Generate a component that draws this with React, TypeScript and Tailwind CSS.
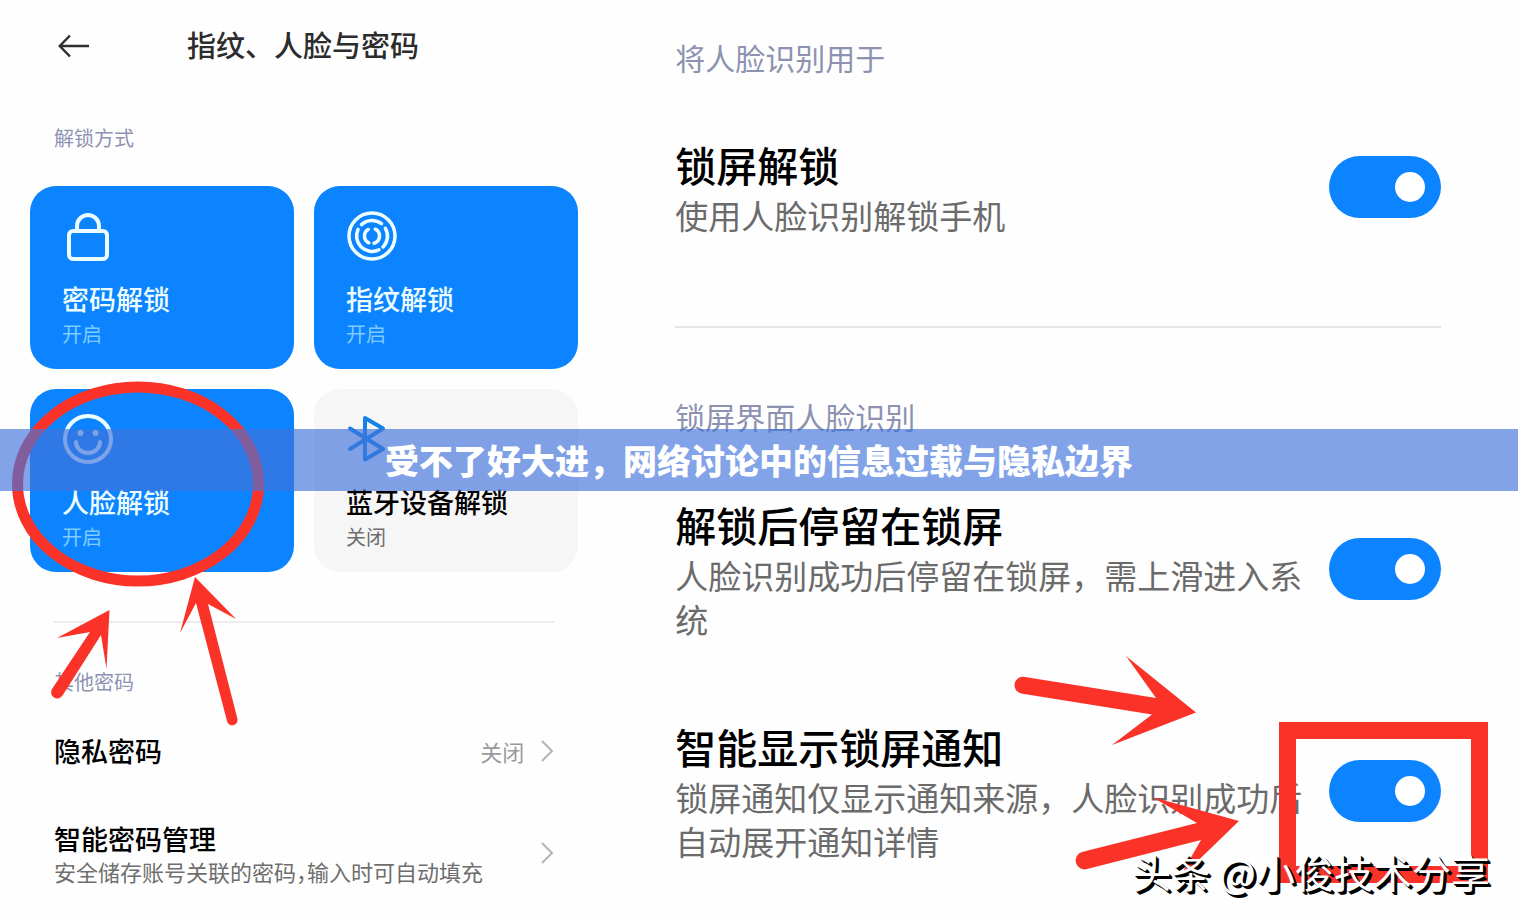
import { useState } from "react";
import type { ReactNode } from "react";

const sectionSmall = "text-[20px] leading-[24px] text-[#8e93b3]";
const sectionLarge = "text-[30px] leading-[40px] text-[#8c92b0]";
const rowTitle = "text-[27px] leading-[36px] font-medium text-black";
const icon = "h-[50px] w-[52px] fill-none";

function LockIcon() {
  return (
    <svg viewBox="0 0 52 50" className={icon} stroke="currentColor" strokeWidth="4">
      <rect x="7" y="20" width="38" height="28" rx="4" />
      <path d="M15 20V15a11 11 0 0 1 22 0V20" />
    </svg>
  );
}

function FingerprintIcon() {
  return (
    <svg viewBox="0 0 52 50" className={icon} stroke="currentColor" strokeWidth="3.5" strokeLinecap="round">
      <circle cx="26" cy="25" r="23" />
      <path d="M15.5 13.6A15.5 15.5 0 0 1 35.5 12.7" />
      <path d="M39.4 17.3A15.5 15.5 0 0 1 37 36" />
      <path d="M33 38.8A15.5 15.5 0 0 1 12 18.4" />
      <path d="M22.2 18.5A7.5 7.5 0 0 0 22.8 31.8" />
      <path d="M29.2 18.2A7.5 7.5 0 0 1 28 32.2" />
    </svg>
  );
}

function SmileIcon() {
  return (
    <svg viewBox="0 0 52 50" className={icon} stroke="currentColor" strokeWidth="4" strokeLinecap="round">
      <circle cx="26" cy="25" r="23" />
      <path d="M14 28a12 11 0 0 0 24 0" />
      <circle cx="18.5" cy="19" r="3" fill="currentColor" stroke="none" />
      <circle cx="33.5" cy="19" r="3" fill="currentColor" stroke="none" />
    </svg>
  );
}

function BluetoothIcon() {
  return (
    <svg
      viewBox="0 0 52 50"
      className={icon}
      stroke="#1583e4"
      strokeWidth="4"
      strokeLinecap="round"
      strokeLinejoin="round"
    >
      <path d="M4 14.5L37 35L19 45.5V4L37 14.5L4 35" />
    </svg>
  );
}

function MethodCard({ icon, title, on }: { icon: ReactNode; title: string; on: boolean }) {
  return (
    <button
      className={`flex flex-col items-start rounded-[26px] pt-[25px] pr-4 pb-[23px] pl-8 text-left ${
        on ? "bg-[#0c84ff] text-[#ecfdff]" : "bg-[#f6f6f6] text-black"
      }`}
    >
      {icon}
      <span className="mt-5 text-[27px] leading-[36px] font-medium">{title}</span>
      <span className={`mt-[5px] text-[20px] leading-[24px] ${on ? "text-[#7fcbff]" : "text-[#6e6e6e]"}`}>
        {on ? "开启" : "关闭"}
      </span>
    </button>
  );
}

function Chevron() {
  return (
    <svg viewBox="0 0 14 24" className="h-6 w-[14px] shrink-0 fill-none" stroke="#b4b4b4" strokeWidth="2">
      <path d="M2 2L12 12L2 22" />
    </svg>
  );
}

function ToggleRow({ id, title, desc, className }: { id: string; title: string; desc: string; className: string }) {
  const [on, setOn] = useState(true);

  return (
    <div className={`flex items-center justify-between gap-4 ${className}`}>
      <label htmlFor={id} className="block">
        <span className="block text-[41px] leading-[50px] font-medium text-black">{title}</span>
        <span className="mt-1 block text-[33px] leading-[44px] text-[#6b6b6b]">{desc}</span>
      </label>
      <div className="shrink-0 pb-0.5">
        <input
          id={id}
          type="checkbox"
          role="switch"
          checked={on}
          onChange={(e) => setOn(e.target.checked)}
          className="flex h-[62px] w-[112px] appearance-none items-center rounded-full bg-[#d9d9d9] px-4 before:size-[30px] before:rounded-full before:bg-white checked:justify-end checked:bg-[#0c84ff]"
        />
      </div>
    </div>
  );
}

// Red hand-drawn marks that lie over both screens
function Marks() {
  return (
    <svg viewBox="0 0 1518 920" className="pointer-events-none absolute top-0 left-0 w-full" fill="#fa3228">
      <ellipse cx="138" cy="484" rx="120.5" ry="97" fill="none" stroke="#fa3228" strokeWidth="11" />
      <path d="M109.5 610L57 638L90 632L52 689A5.500 5.500 0 0 0 62.5 695.500L101 635L106.500 669Z" />
      <path d="M195 577L180 633L196 603L227 721A5.200 5.200 0 0 0 237.500 719L208 604L236 619Z" />
      <path d="M1196 712.5L1126 656L1156 698L1025 677A8.400 8.400 0 0 0 1021 693.500L1152 714.500L1112 745Z" />
      <path d="M1239 821L1152 797L1197 823L1082 852A8.400 8.400 0 0 0 1087 869L1201 840L1178 880Z" />
      <rect x="1287.5" y="730.5" width="192" height="144" fill="none" stroke="#fa3228" strokeWidth="17" />
    </svg>
  );
}

export default function App() {
  return (
    <main className="relative grid min-h-screen grid-cols-[2fr_3fr] overflow-hidden bg-[#fefefe] font-['Noto_Sans_CJK_SC',sans-serif]">
      <section className="pt-[26px] pr-[29px] pb-8 pl-[30px]">
        <header className="flex items-center pl-7">
          <button aria-label="返回">
            <svg viewBox="0 0 32 24" className="h-6 w-8 fill-none" stroke="#303030" strokeWidth="2.5">
              <path d="M12 1.5L1.8 12L12 22.5M2 12H31" />
            </svg>
          </button>
          <h1 className="ml-[97px] pb-1 text-[29px] leading-[36px] font-medium text-[#2c2c2c]">指纹、人脸与密码</h1>
        </header>

        <h2 className={`mt-[60px] ml-6 ${sectionSmall}`}>解锁方式</h2>
        <div className="mt-9 grid grid-cols-2 gap-5">
          <MethodCard icon={<LockIcon />} title="密码解锁" on />
          <MethodCard icon={<FingerprintIcon />} title="指纹解锁" on />
          <MethodCard icon={<SmileIcon />} title="人脸解锁" on />
          <MethodCard icon={<BluetoothIcon />} title="蓝牙设备解锁" on={false} />
        </div>

        <hr className="mx-6 mt-[49px] border-t-2 border-[#ececec]" />

        <div className="mx-6">
          <h2 className={`mt-[47px] ${sectionSmall}`}>其他密码</h2>
          <button className="mt-[39px] flex w-full items-center justify-between text-left">
            <span className={rowTitle}>隐私密码</span>
            <span className="flex items-center gap-4 text-[22px] leading-[28px] text-[#9a9a9a]">
              关闭
              <Chevron />
            </span>
          </button>
          <button className="mt-[52px] flex w-full items-center justify-between text-left">
            <span>
              <span className={`block ${rowTitle}`}>智能密码管理</span>
              <span className="block text-[22px] leading-[28px] text-[#6e6e6e] [font-feature-settings:'halt']">
                安全储存账号关联的密码，输入时可自动填充
              </span>
            </span>
            <Chevron />
          </button>
        </div>
      </section>

      <section className="pt-[37px] pr-[77px] pl-[68px]">
        <h2 className={sectionLarge}>将人脸识别用于</h2>
        <ToggleRow id="unlock" title="锁屏解锁" desc="使用人脸识别解锁手机" className="mt-[62px]" />
        <hr className="mt-[89px] border-t-2 border-[#e6e6e6]" />
        <h2 className={`mt-[68px] ${sectionLarge}`}>锁屏界面人脸识别</h2>
        <ToggleRow
          id="stay"
          title="解锁后停留在锁屏"
          desc="人脸识别成功后停留在锁屏，需上滑进入系统"
          className="mt-[63px]"
        />
        <ToggleRow
          id="notify"
          title="智能显示锁屏通知"
          desc="锁屏通知仅显示通知来源，人脸识别成功后自动展开通知详情"
          className="mt-20"
        />
      </section>

      <Marks />

      <p className="absolute right-7 bottom-6 text-[39px] leading-[50px] whitespace-nowrap text-white [text-shadow:1px_1px_0_#000,2px_2px_0_#000,3px_3px_0_#000]">
        头条 @小俊技术分享
      </p>

      <div className="absolute inset-x-0 top-[429px] flex h-[62px] items-center justify-center bg-[#4273da]/66">
        <p className="text-[34px] leading-[50px] font-black text-white">受不了好大进，网络讨论中的信息过载与隐私边界</p>
      </div>
    </main>
  );
}
